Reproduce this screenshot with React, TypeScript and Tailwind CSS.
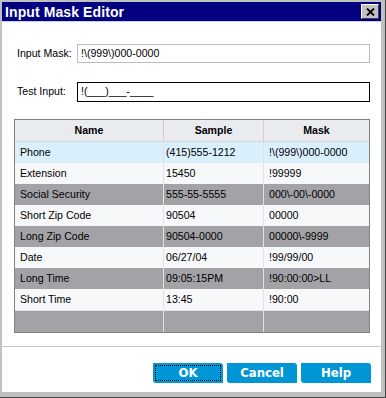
import React from "react";

const rows: { name: string; sample: string; mask: string; kind: "sel" | "w" | "g" }[] = [
  { name: "Phone", sample: "(415)555-1212", mask: "!\\(999\\)000-0000", kind: "sel" },
  { name: "Extension", sample: "15450", mask: "!99999", kind: "w" },
  { name: "Social Security", sample: "555-55-5555", mask: "000\\-00\\-0000", kind: "g" },
  { name: "Short Zip Code", sample: "90504", mask: "00000", kind: "w" },
  { name: "Long Zip Code", sample: "90504-0000", mask: "00000\\-9999", kind: "g" },
  { name: "Date", sample: "06/27/04", mask: "!99/99/00", kind: "w" },
  { name: "Long Time", sample: "09:05:15PM", mask: "!90:00:00>LL", kind: "g" },
  { name: "Short Time", sample: "13:45", mask: "!90:00", kind: "w" },
];

const bgFor = (k: string) =>
  k === "sel" ? "bg-[#d9f0fc]" : k === "g" ? "bg-[#a3a3a7]" : "bg-[#f7f8fa]";

export default function App() {
  return (
    <div
      className="w-[386px] h-[398px] bg-[#c0c0c0] pl-[2px] pt-[2px] pr-[4px] pb-[5px] flex flex-col border-r border-b border-[#404040] relative"
      style={{ fontFamily: '"Liberation Sans", Arial, sans-serif' }}
    >
      <div className="h-[19px] bg-[#000080] flex items-center justify-between pl-[3px] pr-[2px]">
        <span className="text-white font-bold text-[14px] leading-none tracking-[0.1px]">Input Mask Editor</span>
        <div className="w-[18px] h-[15px] bg-[#c0c0c0] border border-t-white border-l-white border-r-[#404040] border-b-[#404040] flex items-center justify-center">
          <svg width="9" height="8" viewBox="0 0 9 8">
            <path d="M1 0.5 L8 7.5 M8 0.5 L1 7.5" stroke="#000" strokeWidth="1.8" />
          </svg>
        </div>
      </div>
      <div className="h-[1px] bg-[#c8d0f0]" />
      <div className="flex-1 bg-white flex flex-col text-[10.6px] text-black">
        <div className="mt-[22px] flex items-center">
          <div className="ml-[15px] w-[60px]">Input Mask:</div>
          <div className="w-[293px] h-[19px] border border-[#bdbdbd] flex items-center pl-[3px]">
            {"!\\(999\\)000-0000"}
          </div>
        </div>
        <div className="mt-[19px] flex items-center">
          <div className="ml-[15px] w-[60px]">Test Input:</div>
          <div className="w-[293px] h-[20px] border border-black flex items-center pl-[3px]">
            !(___)___-____
          </div>
        </div>
        <div className="mt-[17px] ml-[12px] w-[356px] border border-[#828282] flex flex-col">
          <div className="flex h-[22px] bg-[#e9ebef] border-b border-[#d4d4d8] font-bold">
            <div className="w-[149px] flex items-center justify-center border-r border-[#d0d0d4]">Name</div>
            <div className="w-[100px] flex items-center justify-center border-r border-[#d0d0d4]">Sample</div>
            <div className="w-[105px] flex items-center justify-center">Mask</div>
          </div>
          {rows.map((r) => (
            <div key={r.name} className={`flex h-[21px] ${bgFor(r.kind)}`}>
              <div className="w-[149px] flex items-center pl-[5px] border-r border-[#e2e2e6]">{r.name}</div>
              <div className="w-[100px] flex items-center pl-[2px] border-r border-[#e2e2e6]">{r.sample}</div>
              <div className="w-[105px] flex items-center pl-[5px]">{r.mask}</div>
            </div>
          ))}
          <div className="flex h-[22px] bg-[#a3a3a7] border-t border-[#e2e2e6]">
            <div className="w-[149px] border-r border-[#e2e2e6]" />
            <div className="w-[100px] border-r border-[#e2e2e6]" />
            <div className="w-[105px]" />
          </div>
        </div>
        <div className="mt-[13px] h-[1px] bg-[#c8c8c8]" />
        <div className="mt-[16px] flex justify-end gap-[4px] pr-[10px]">
          {["OK", "Cancel", "Help"].map((b) => (
            <div
              key={b}
              className="relative w-[70px] h-[20px] bg-[#0096d6] rounded-tr-[3px] rounded-bl-[3px] flex items-center justify-center text-white font-bold text-[13px]"
              style={{ fontFamily: '"DejaVu Sans Condensed", "DejaVu Sans", sans-serif' }}
            >
              {b}
              {b === "OK" && (
                <div className="absolute left-[2px] top-[2px] right-[2px] bottom-[2px] border border-dotted border-black" />
              )}
            </div>
          ))}
        </div>
      </div>
    </div>
  );
}
